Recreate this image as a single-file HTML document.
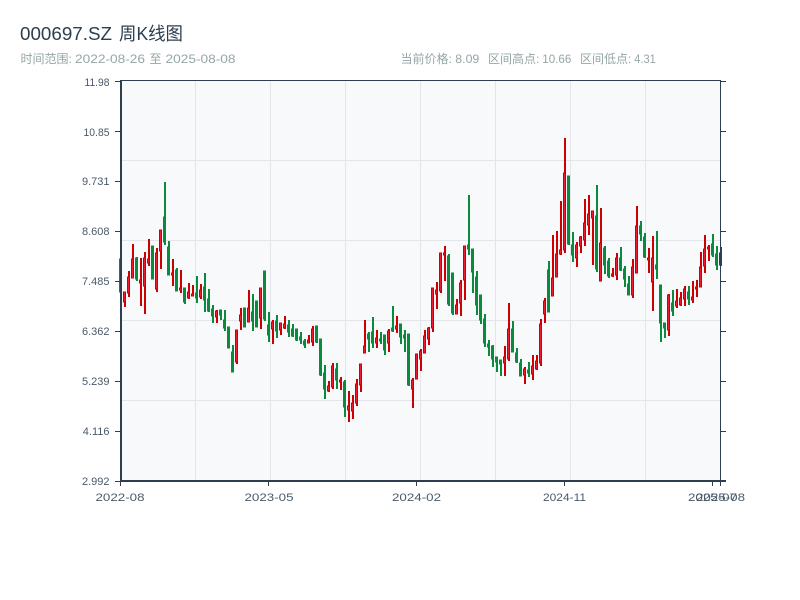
<!DOCTYPE html>
<html><head><meta charset="utf-8"><style>
html,body{margin:0;padding:0;background:#fff;width:800px;height:600px;overflow:hidden}
svg{position:absolute;left:0;top:0}
text{font-family:"Liberation Sans","Noto Sans CJK SC",sans-serif}
</style></head><body>
<svg width="800" height="600" viewBox="0 0 800 600" xmlns="http://www.w3.org/2000/svg">
<rect x="120" y="80" width="600" height="400" fill="#f8f9fa"/>
<g fill="#e3e5ea">
<rect x="195" y="80" width="1" height="400"/><rect x="270" y="80" width="1" height="400"/><rect x="345" y="80" width="1" height="400"/><rect x="420" y="80" width="1" height="400"/><rect x="495" y="80" width="1" height="400"/><rect x="570" y="80" width="1" height="400"/><rect x="645" y="80" width="1" height="400"/>
<rect x="120" y="160" width="600" height="1"/><rect x="120" y="240" width="600" height="1"/><rect x="120" y="320" width="600" height="1"/><rect x="120" y="400" width="600" height="1"/>
</g>
<path fill="none" stroke="#0a8a3c" stroke-width="2" d="M121 259V292M137 257V281M153 246V279M165 182V245M169 241V275M177 268V291M185 288V304M197 276V303M205 273V312M209 289V312M213 305V323M221 310V320M225 310V331M229 327V348M233 345V372M245 308V327M253 294V331M257 301V327M265 271V321M269 312V342M277 315V338M289 320V337M293 324V337M297 329V341M301 332V344M305 339V348M317 326V343M321 339V376M325 365V399M337 363V389M345 380V417M369 332V352M373 317V348M381 332V344M385 335V355M393 306V332M401 324V344M405 330V352M409 334V386M449 254V306M453 273V315M469 195V255M473 249V293M477 271V315M481 295V324M485 314V347M489 340V356M493 345V367M497 357V372M501 360V376M513 321V352M517 348V363M521 359V376M529 362V377M549 261V312M569 176V245M573 232V262M597 185V272M605 246V274M609 258V278M621 247V271M625 266V287M629 276V295M641 221V241M645 233V258M657 231V279M661 285V342M665 323V338M673 290V316M689 286V305M713 234V257M717 246V270"/>
<path fill="#0a8a3c" stroke="#0a8a3c" stroke-width="1" d="M119.500 259h2V292h-2zM135.500 258h2V279h-2zM151.500 246h2V279h-2zM163.500 217h2V242h-2zM167.500 247h2V275h-2zM175.500 270h2V291h-2zM183.500 288h2V302h-2zM195.500 293h2V298h-2zM203.500 287h2V300h-2zM207.500 299h2V311h-2zM211.500 309h2V316h-2zM219.500 310h2V315h-2zM223.500 320h2V328h-2zM227.500 327h2V348h-2zM231.500 352h2V372h-2zM243.500 308h2V327h-2zM251.500 312h2V321h-2zM255.500 301h2V327h-2zM263.500 271h2V319h-2zM267.500 325h2V335h-2zM275.500 321h2V331h-2zM287.500 325h2V332h-2zM291.500 329h2V336h-2zM295.500 329h2V340h-2zM299.500 337h2V340h-2zM303.500 341h2V345h-2zM315.500 326h2V342h-2zM319.500 339h2V375h-2zM323.500 373h2V389h-2zM335.500 369h2V380h-2zM343.500 382h2V407h-2zM367.500 334h2V339h-2zM371.500 332h2V343h-2zM379.500 339h2V341h-2zM383.500 335h2V350h-2zM391.500 328h2V331h-2zM399.500 324h2V337h-2zM403.500 335h2V338h-2zM407.500 334h2V385h-2zM447.500 256h2V304h-2zM451.500 273h2V313h-2zM467.500 245h2V249h-2zM471.500 249h2V272h-2zM475.500 277h2V305h-2zM479.500 295h2V320h-2zM483.500 319h2V343h-2zM487.500 344h2V347h-2zM491.500 346h2V359h-2zM495.500 357h2V362h-2zM499.500 360h2V364h-2zM511.500 329h2V352h-2zM515.500 353h2V362h-2zM519.500 363h2V376h-2zM527.500 370h2V373h-2zM547.500 270h2V312h-2zM567.500 176h2V244h-2zM571.500 245h2V255h-2zM595.500 216h2V269h-2zM603.500 248h2V265h-2zM607.500 261h2V276h-2zM619.500 258h2V270h-2zM623.500 269h2V279h-2zM627.500 284h2V295h-2zM639.500 226h2V234h-2zM643.500 237h2V257h-2zM655.500 265h2V269h-2zM659.500 285h2V323h-2zM663.500 323h2V328h-2zM671.500 303h2V311h-2zM687.500 292h2V299h-2zM711.500 244h2V255h-2zM715.500 254h2V265h-2z"/>
<path fill="none" stroke="#cc0000" stroke-width="2" d="M125 292V307M129 271V297M133 244V278M141 258V306M145 252V314M149 239V266M157 248V292M161 230V269M173 259V286M181 270V293M189 283V299M193 285V296M201 284V299M217 310V323M237 330V364M241 308V330M249 290V322M261 288V329M273 320V344M281 323V335M285 316V329M309 335V343M313 326V346M329 381V392M333 363V389M341 377V390M349 391V422M353 395V419M357 379V406M361 364V392M365 320V353M377 330V348M389 329V352M397 316V333M413 378V408M417 354V379M421 349V371M425 330V353M429 327V345M433 288V332M437 282V309M441 253V293M445 246V281M457 299V314M461 280V316M465 246V300M505 346V376M509 303V361M525 367V384M533 355V380M537 355V370M541 319V366M545 298V323M553 235V296M557 231V277M561 201V255M565 138V253M577 242V267M581 236V253M585 199V246M589 195V235M593 211V265M601 208V281M613 268V277M617 253V280M633 259V298M637 206V273M649 248V273M653 236V311M669 294V336M677 289V308M681 292V306M685 286V306M693 281V303M697 280V297M701 252V287M705 235V273M709 245V261M721 247V266"/>
<path fill="#ee1c2e" stroke="#cc0000" stroke-width="1" d="M123.500 292h2V302h-2zM127.500 277h2V293h-2zM131.500 259h2V278h-2zM139.500 280h2V283h-2zM143.500 258h2V286h-2zM147.500 259h2V263h-2zM155.500 253h2V289h-2zM159.500 230h2V251h-2zM171.500 273h2V275h-2zM179.500 288h2V290h-2zM187.500 292h2V298h-2zM191.500 294h2V296h-2zM199.500 290h2V297h-2zM215.500 311h2V317h-2zM235.500 330h2V362h-2zM239.500 315h2V321h-2zM247.500 308h2V322h-2zM259.500 288h2V318h-2zM271.500 322h2V329h-2zM279.500 323h2V330h-2zM283.500 324h2V328h-2zM307.500 340h2V343h-2zM311.500 329h2V342h-2zM327.500 386h2V391h-2zM331.500 366h2V387h-2zM339.500 380h2V382h-2zM347.500 406h2V410h-2zM351.500 403h2V411h-2zM355.500 384h2V403h-2zM359.500 364h2V385h-2zM363.500 346h2V353h-2zM375.500 338h2V343h-2zM387.500 331h2V343h-2zM395.500 326h2V329h-2zM411.500 380h2V389h-2zM415.500 354h2V379h-2zM419.500 351h2V359h-2zM423.500 336h2V353h-2zM427.500 328h2V339h-2zM431.500 288h2V328h-2zM435.500 290h2V294h-2zM439.500 253h2V291h-2zM443.500 253h2V255h-2zM455.500 305h2V314h-2zM459.500 283h2V303h-2zM463.500 246h2V280h-2zM503.500 357h2V363h-2zM507.500 329h2V359h-2zM523.500 369h2V375h-2zM531.500 366h2V374h-2zM535.500 361h2V369h-2zM539.500 324h2V363h-2zM543.500 301h2V314h-2zM551.500 278h2V296h-2zM555.500 254h2V277h-2zM559.500 250h2V254h-2zM563.500 173h2V250h-2zM575.500 245h2V258h-2zM579.500 237h2V246h-2zM583.500 223h2V240h-2zM587.500 214h2V225h-2zM591.500 211h2V218h-2zM599.500 243h2V281h-2zM611.500 274h2V276h-2zM615.500 258h2V275h-2zM631.500 267h2V295h-2zM635.500 226h2V273h-2zM647.500 258h2V260h-2zM651.500 258h2V282h-2zM667.500 295h2V330h-2zM675.500 301h2V306h-2zM679.500 298h2V305h-2zM683.500 289h2V299h-2zM691.500 297h2V300h-2zM695.500 287h2V289h-2zM699.500 267h2V287h-2zM703.500 249h2V266h-2zM707.500 247h2V249h-2zM719.500 253h2V265h-2z"/>
<g fill="#2c3e50">
<rect x="120" y="80" width="2" height="402"/>
<rect x="720" y="80" width="1" height="402"/>
<rect x="120" y="80" width="601" height="1"/>
<rect x="120" y="480" width="606" height="2"/>
<rect x="115" y="81" width="5" height="1"/><rect x="115" y="131" width="5" height="1"/><rect x="115" y="181" width="5" height="1"/><rect x="115" y="231" width="5" height="1"/><rect x="115" y="281" width="5" height="1"/><rect x="115" y="331" width="5" height="1"/><rect x="115" y="381" width="5" height="1"/><rect x="115" y="431" width="5" height="1"/><rect x="115" y="481" width="5" height="1"/>
<rect x="721" y="81" width="5" height="1"/><rect x="721" y="131" width="5" height="1"/><rect x="721" y="181" width="5" height="1"/><rect x="721" y="231" width="5" height="1"/><rect x="721" y="281" width="5" height="1"/><rect x="721" y="331" width="5" height="1"/><rect x="721" y="381" width="5" height="1"/><rect x="721" y="431" width="5" height="1"/>
<rect x="120" y="482" width="1" height="4"/><rect x="268" y="482" width="1" height="4"/><rect x="416" y="482" width="1" height="4"/><rect x="564" y="482" width="1" height="4"/><rect x="712" y="482" width="1" height="4"/><rect x="720" y="482" width="1" height="4"/>
</g>
<g font-size="18" fill="#2c3e50">
<text x="20" y="40" textLength="92" lengthAdjust="spacingAndGlyphs">000697.SZ</text>
<text x="119" y="40" textLength="64" lengthAdjust="spacingAndGlyphs">周K线图</text>
</g>
<g font-size="12" fill="#95a5a6">
<text x="20.500" y="63">时间范围:</text>
<text x="75" y="63" textLength="70" lengthAdjust="spacingAndGlyphs">2022-08-26</text>
<text x="149.500" y="63">至</text>
<text x="165.500" y="63" textLength="70" lengthAdjust="spacingAndGlyphs">2025-08-08</text>
<text x="400.500" y="63">当前价格:</text>
<text x="455.300" y="63" textLength="24" lengthAdjust="spacingAndGlyphs">8.09</text>
<text x="488" y="63">区间高点:</text>
<text x="542.300" y="63" textLength="29" lengthAdjust="spacingAndGlyphs">10.66</text>
<text x="580" y="63">区间低点:</text>
<text x="634.300" y="63" textLength="21.500" lengthAdjust="spacingAndGlyphs">4.31</text>
</g>
<g font-size="11" fill="#4a5a6a" text-anchor="end">
<text x="109.500" y="86" textLength="25" lengthAdjust="spacingAndGlyphs">11.98</text><text x="109.500" y="136" textLength="26" lengthAdjust="spacingAndGlyphs">10.85</text><text x="109.500" y="185">9.731</text><text x="109.500" y="235">8.608</text><text x="109.500" y="285">7.485</text><text x="109.500" y="335">6.362</text><text x="109.500" y="385">5.239</text><text x="109.500" y="435">4.116</text><text x="109.500" y="485">2.992</text>
</g>
<g font-size="11" fill="#4a5a6a">
<text x="95.500" y="501" textLength="49" lengthAdjust="spacingAndGlyphs">2022-08</text>
<text x="244.500" y="501" textLength="49" lengthAdjust="spacingAndGlyphs">2023-05</text>
<text x="392" y="501" textLength="49" lengthAdjust="spacingAndGlyphs">2024-02</text>
<text x="543" y="501" textLength="43" lengthAdjust="spacingAndGlyphs">2024-11</text>
<text x="688" y="501" textLength="49" lengthAdjust="spacingAndGlyphs">2025-07</text>
<text x="696" y="501" textLength="49" lengthAdjust="spacingAndGlyphs">2025-08</text>
</g>
</svg>
</body></html>
